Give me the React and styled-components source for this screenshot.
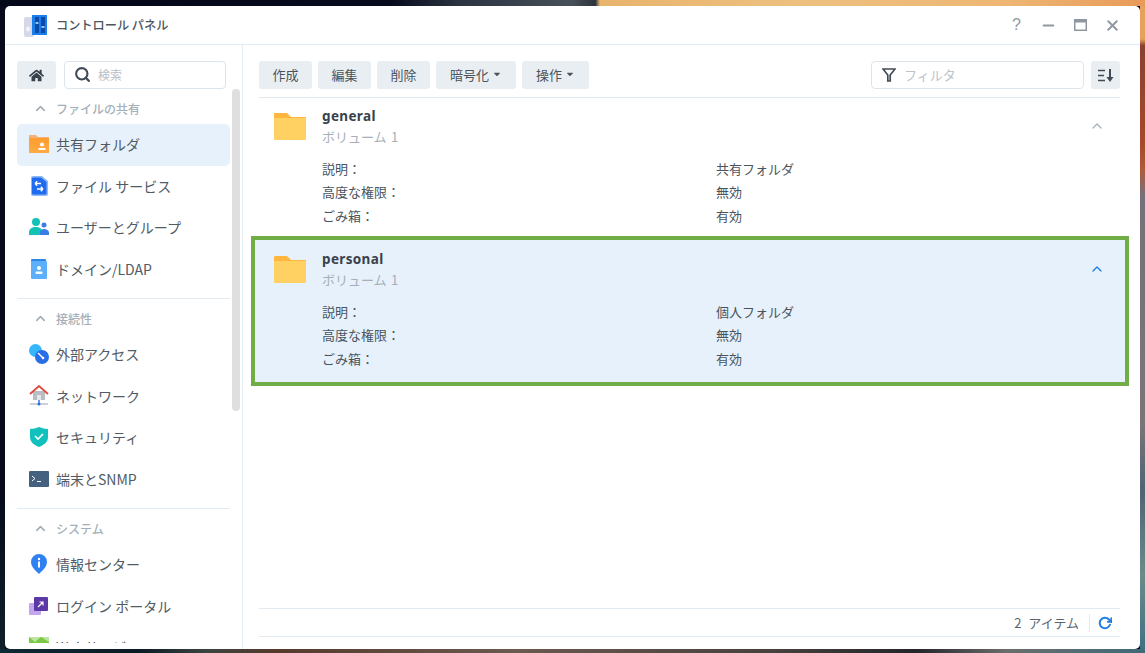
import React from "react";
import styled, { createGlobalStyle } from "styled-components";
import { FiChevronUp, FiSearch, FiX, FiMinus, FiRotateCw } from "react-icons/fi";
import { FaHome, FaCaretDown } from "react-icons/fa";

const cjk = `"Noto Sans CJK JP", "Noto Sans", sans-serif`;
const line = "#e3ebf2";
const btnBg = "#e9eef3";
const fg = "#414b55";
const muted = "#a6afb8";

const Global = createGlobalStyle`
  html, body { margin:0; padding:0; height:100%; overflow:hidden; }
  body {
    font-family:${cjk};
    color:${fg};
    background:
      linear-gradient(90deg, #040818 0, #060a1c 34%, #2a3340 40%, #46505a 50%, #3a4048 51%, #2c3440 52%, #e9b46c 52.4%, #edc080 70%, #eeb673 88%, #e89a58 100%) top/100% 6px no-repeat,
      linear-gradient(90deg, #0e2a34 0, #0a1a24 12%, #3a4440 18%, #553a2c 24%, #6a5a50 45%, #45403c 68%, #22262a 80%, #6a6e6c 88%, #3f6a78 100%) bottom/100% 4px no-repeat,
      linear-gradient(180deg, #e9a05c 0, #e9a05c 6%, #8a4030 7%, #a8482a 22%, #b05a3c 26%, #77707a 30%, #7c7478 65%, #4f6474 75%, #6c8a8a 88%, #3c7084 100%) right/5px 100% no-repeat,
      linear-gradient(180deg, #060a1c 0, #060a1c 75%, #10202a 100%) left/5px 100% no-repeat,
      #060a1c;
  }
`;

const Win = styled.div`
  position:absolute;
  left:5px; top:6px;
  width:1135px; height:643px;
  background:#fff;
  border-radius:5px;
  display:flex;
  flex-direction:column;
  overflow:hidden;
`;

const TitleBar = styled.header`
  height:39px;
  box-sizing:border-box;
  flex:none;
  border-bottom:1px solid ${line};
  display:flex;
  align-items:center;
  padding-left:18px;
  color:#4b5560;
  gap:9px;
`;

const TitleText = styled.span`
  flex:1;
  font-size:12.2px;
  font-weight:500;
`;

const WinButtons = styled.div`
  display:flex;
  align-items:center;
  gap:11px;
  padding-right:17px;
`;

const WinBtn = styled.span`
  width:21px;
  height:21px;
  display:flex;
  align-items:center;
  justify-content:center;
  font-family:"Liberation Sans", sans-serif;
  font-size:16px;
  color:#8f98a1;
`;

const Body = styled.div`
  flex:1;
  display:flex;
  min-height:0;
`;

const Side = styled.aside`
  width:237px;
  flex:none;
  border-right:1px solid ${line};
  padding-top:16px;
  padding-bottom:6px;
  position:relative;
  display:flex;
  flex-direction:column;
`;

const SideTop = styled.div`
  display:flex;
  gap:8px;
  padding:0 16px 0 12px;
  flex:none;
`;

const HomeBtn = styled.button`
  width:39px;
  height:28px;
  border:0;
  border-radius:3px;
  background:${btnBg};
  color:#37424d;
  display:flex;
  align-items:center;
  justify-content:center;
  font-size:15px;
  padding:0;
`;

const SearchBox = styled.div`
  width:162px;
  height:28px;
  box-sizing:border-box;
  border:1px solid #dde5ec;
  border-radius:4px;
  display:flex;
  align-items:center;
  padding:0 0 1px 9px;
  gap:7px;
  font-size:12px;
  color:#b9c0c7;
  svg { color:#414b55; font-size:17px; stroke-width:3; }
`;

const Scrollbar = styled.div`
  position:absolute;
  right:2px;
  top:44px;
  width:8px;
  height:322px;
  border-radius:4px;
  background:#dfdfdf;
`;

const Nav = styled.nav`
  flex:1;
  overflow:hidden;
  padding:3px 12px 0;
`;

const SectionHead = styled.div`
  height:32px;
  display:flex;
  align-items:center;
  padding-left:16px;
  gap:8px;
  font-size:12px;
  color:${muted};
  font-weight:500;
  svg { font-size:15px; stroke-width:2.5; color:#a3acb4; }
`;

const Item = styled.div`
  height:41.5px;
  width:213px;
  box-sizing:border-box;
  border-radius:5px;
  display:flex;
  align-items:center;
  padding:0 0 1px 12px;
  gap:7px;
  font-size:14px;
  color:#515b65;
  background:${p => (p.$active ? "#e6f1fb" : "transparent")};
  svg { flex:none; }
`;

const Divider = styled.div`
  width:213px;
  height:1px;
  background:${line};
  margin:8px 0 3px;
`;

const Main = styled.main`
  flex:1;
  min-width:0;
  display:flex;
  flex-direction:column;
  padding:16px 20px 12px 16px;
`;

const Toolbar = styled.div`
  display:flex;
  gap:6px;
  flex:none;
  padding-bottom:8px;
  box-sizing:border-box;
  border-bottom:1px solid #dfe6ec;
  height:37px;
`;

const ToolBtn = styled.button`
  height:28px;
  width:${p => p.$w}px;
  padding:0 0 2px;
  border:0;
  border-radius:3px;
  background:${btnBg};
  color:#4a545e;
  font-family:${cjk};
  font-size:13px;
  display:flex;
  align-items:center;
  justify-content:center;
  gap:3px;
  svg { font-size:10px; }
`;

const Filter = styled.div`
  margin-left:auto;
  width:213px;
  height:28px;
  box-sizing:border-box;
  border:1px solid #dde5ec;
  border-radius:4px;
  display:flex;
  align-items:center;
  padding:0 0 2px 10px;
  gap:8px;
  font-size:13px;
  color:#bcc3ca;
  svg { margin-top:2px; }
`;

const SortBtn = styled(ToolBtn)`
  width:29px;
  margin-left:1px;
  padding:0;
`;

const List = styled.div`
  flex:1;
  min-height:0;
`;

const Row = styled.section`
  position:relative;
  display:grid;
  grid-template-columns:32px 1fr;
  column-gap:16px;
  box-sizing:border-box;
  padding:${p => (p.$selected ? "11px 0 0 19px" : "10px 0 0 15px")};
  height:${p => (p.$selected ? "150px" : "138px")};
  background:${p => (p.$selected ? "#e6f1fb" : "#fff")};
  border:${p => (p.$selected ? "4px solid #70ad47" : "0")};
  margin:${p => (p.$selected ? "0 -9px 0 -8px" : "0")};
  > svg { margin-top:4px; }
`;

const RowName = styled.div`
  font-family:"Noto Sans", sans-serif;
  font-size:13.5px;
  font-weight:700;
  line-height:16px;
  letter-spacing:.35px;
  color:#37424d;
`;

const RowVol = styled.div`
  font-size:13px;
  line-height:16px;
  margin-top:5px;
  word-spacing:1.5px;
  color:${muted};
`;

const Props = styled.dl`
  margin:11.5px 0 0;
  display:grid;
  grid-template-columns:394px 1fr;
  grid-auto-rows:23.5px;
  align-items:center;
  font-size:13px;
  color:#4a545e;
  dt, dd { margin:0; }
`;

const Chevron = styled.span`
  position:absolute;
  top:${p => (p.$selected ? "21px" : "20px")};
  right:${p => (p.$selected ? "20px" : "15px")};
  font-size:16px;
  line-height:0;
  color:${p => (p.$selected ? "#1f7fe0" : "#aab3bb")};
`;

const Footer = styled.footer`
  flex:none;
  height:29px;
  box-sizing:border-box;
  border-top:1px solid ${line};
  border-bottom:1px solid ${line};
  display:flex;
  align-items:center;
  justify-content:flex-end;
  font-size:13px;
  word-spacing:4px;
  color:#5a646e;
`;

const FooterSep = styled.span`
  width:1px;
  height:18px;
  background:${line};
  margin:0 8px 0 10px;
`;

const Refresh = styled.span`
  color:#1f7fe0;
  font-size:14px;
  line-height:0;
  margin-right:8px;
  svg { stroke-width:3.4; }
`;

const PanelIcon = () => (
  <svg width="24" height="23" viewBox="0 0 24 23">
    <rect x="1" y="3" width="10" height="20" rx="2" fill="#d5d8e8" />
    <ellipse cx="5" cy="15" rx="2" ry="2.600" fill="#f4f5fa" />
    <rect x="9" y="1" width="15" height="20" fill="#1a7de8" />
    <rect x="12" y="3" width="4" height="16" fill="#0b4aa8" />
    <rect x="18" y="3" width="4" height="16" fill="#0b4aa8" />
    <rect x="12.500" y="8" width="3" height="2" fill="#8fc4f5" />
    <rect x="18.500" y="12" width="3" height="2" fill="#8fc4f5" />
  </svg>
);

const FolderIcon = () => (
  <svg width="32" height="28" viewBox="0 0 32 28">
    <path d="M0 2a1 1 0 0 1 1-1h12l4 4h15v6H0z" fill="#ffb63f" />
    <path d="M0 6h32v21a1 1 0 0 1-1 1H1a1 1 0 0 1-1-1z" fill="#ffd062" />
  </svg>
);

const SharedIcon = () => (
  <svg width="20" height="20" viewBox="0 0 20 20">
    <defs>
      <linearGradient id="sharedFill" x1="0" y1="0" x2="0" y2="1">
        <stop offset="0" stopColor="#ff9d2e" />
        <stop offset="1" stopColor="#ffab45" />
      </linearGradient>
    </defs>
    <path d="M0 1h7l2 2h11v3H0z" fill="#f4b27a" />
    <rect x="0" y="4" width="20" height="15" fill="url(#sharedFill)" />
    <circle cx="13" cy="10.500" r="2" fill="#fff" />
    <rect x="9.500" y="14" width="7" height="2" fill="#fff" />
  </svg>
);

const FileSvcIcon = () => (
  <svg width="20" height="20" viewBox="0 0 20 20">
    <path d="M4 0h9l6 5v13a2 2 0 0 1-2 2H4a2 2 0 0 1-2-2V2a2 2 0 0 1 2-2z" fill="#8fb8f5" />
    <path d="M4 1.500h8l5.500 4.500v11.500a1 1 0 0 1-1 1H4a1 1 0 0 1-1-1V2.500a1 1 0 0 1 1-1z" fill="#1f6cf0" />
    <path d="M12 7.500H6M6 7.500l2.200-2.200M6 7.500l2.200 2.200M8 13h6M14 13l-2.200-2.200M14 13l-2.200 2.200" stroke="#fff" strokeWidth="1.400" fill="none" />
  </svg>
);

const UsersIcon = () => (
  <svg width="20" height="20" viewBox="0 0 20 20">
    <circle cx="7" cy="5" r="4" fill="#14c2b5" />
    <path d="M0 18v-3c0-3 3-5 7-5 3 0 5 1 6 3v5z" fill="#14c2b5" />
    <circle cx="15" cy="8" r="2.500" fill="#3a7de8" />
    <path d="M11 18v-2c0-3 2-4 4-4s5 1 5 4v2z" fill="#3a7de8" />
  </svg>
);

const DomainIcon = () => (
  <svg width="20" height="20" viewBox="0 0 20 20">
    <rect x="2" y="0" width="15" height="3" rx="1" fill="#2b86e8" />
    <rect x="2" y="2" width="16" height="18" rx="1" fill="#5cb0fb" />
    <circle cx="10" cy="9" r="2" fill="#fff" />
    <rect x="6.500" y="12.500" width="7" height="2.500" rx="1" fill="#fff" />
  </svg>
);

const AccessIcon = () => (
  <svg width="20" height="20" viewBox="0 0 20 20">
    <circle cx="6.500" cy="6.500" r="6.500" fill="#36b6fb" />
    <circle cx="13" cy="13" r="7" fill="#2a6ee6" />
    <path d="M9 9l5 5" stroke="#fff" strokeWidth="1.400" />
    <circle cx="14" cy="14" r="1.300" fill="#fff" />
  </svg>
);

const NetIcon = () => (
  <svg width="20" height="21" viewBox="0 0 20 21">
    <rect x="4" y="6" width="12" height="9" fill="#b8bec4" />
    <path d="M1 9l9-8 9 8" fill="none" stroke="#e0483e" strokeWidth="1.800" />
    <rect x="8" y="10" width="4" height="5" fill="#e4e7ea" />
    <path d="M1 19h18" stroke="#b8bec4" strokeWidth="1.400" />
    <path d="M10 15v4" stroke="#2a6ee6" strokeWidth="1.400" />
    <circle cx="10" cy="19" r="1.500" fill="#2a6ee6" />
  </svg>
);

const ShieldIcon = () => (
  <svg width="20" height="20" viewBox="0 0 20 20">
    <path d="M1 2c3 0 6-1 9-2 3 1 6 2 9 2v8c0 5-4 8-9 10-5-2-9-5-9-10z" fill="#12c0bd" />
    <path d="M6 9l3 3 5-5" fill="none" stroke="#fff" strokeWidth="1.700" />
  </svg>
);

const TermIcon = () => (
  <svg width="20" height="16" viewBox="0 0 20 16">
    <rect width="20" height="16" rx="1" fill="#44617f" />
    <path d="M3 5l3 2.500L3 10" fill="none" stroke="#fff" strokeWidth="1" />
    <path d="M8 10.500h4" stroke="#fff" strokeWidth="1" />
  </svg>
);

const InfoIcon = () => (
  <svg width="20" height="20" viewBox="0 0 20 20">
    <path d="M10 0a8 8 0 0 1 8 8c0 5-5 9-8 12-3-3-8-7-8-12a8 8 0 0 1 8-8z" fill="#2f80f0" />
    <circle cx="10" cy="5" r="1.200" fill="#fff" />
    <rect x="9" y="7.500" width="2" height="6" fill="#fff" />
  </svg>
);

const PortalIcon = () => (
  <svg width="20" height="20" viewBox="0 0 20 20">
    <rect x="0" y="7" width="12" height="12" rx="1" fill="#c3a6ee" />
    <rect x="5" y="1" width="14" height="14" rx="1" fill="#5b3aa8" />
    <path d="M9 11l5-5M10.500 6H14v3.500" fill="none" stroke="#fff" strokeWidth="1.200" />
  </svg>
);

const WebIcon = () => (
  <svg width="20" height="20" viewBox="0 0 20 20">
    <rect width="20" height="20" fill="#7ac943" />
    <path d="M0 0l6 5 6-5zM12 0h8v5z" fill="#fff" opacity=".5" />
  </svg>
);

const MaxIcon = () => (
  <svg width="13" height="12" viewBox="0 0 13 12">
    <rect x="0.750" y="0.750" width="11.500" height="10.500" fill="none" stroke="#8f98a1" strokeWidth="1.500" />
    <rect x="0" y="0" width="13" height="3.500" fill="#8f98a1" />
  </svg>
);

const FunnelIcon = () => (
  <svg width="14" height="14" viewBox="0 0 14 14">
    <path d="M1 1h12L8.200 7v6H5.800V7z" fill="none" stroke="#414b55" strokeWidth="1.700" />
  </svg>
);

const SortIcon = () => (
  <svg width="16" height="13" viewBox="0 0 16 13">
    <path d="M0 1.500h7M0 6.500h6M0 11.500h7" stroke="#414b55" strokeWidth="1.600" />
    <path d="M12 0v9" stroke="#414b55" strokeWidth="2" />
    <path d="M8.500 8h7L12 13z" fill="#414b55" />
  </svg>
);

const sections = [
  { title: "ファイルの共有", items: [
    ["共有フォルダ", SharedIcon, true],
    ["ファイル サービス", FileSvcIcon],
    ["ユーザーとグループ", UsersIcon],
    ["ドメイン/LDAP", DomainIcon],
  ]},
  { title: "接続性", items: [
    ["外部アクセス", AccessIcon],
    ["ネットワーク", NetIcon],
    ["セキュリティ", ShieldIcon],
    ["端末とSNMP", TermIcon],
  ]},
  { title: "システム", items: [
    ["情報センター", InfoIcon],
    ["ログイン ポータル", PortalIcon],
    ["Webサービス", WebIcon],
  ]},
];

const folders = [
  { name: "general", desc: "共有フォルダ" },
  { name: "personal", desc: "個人フォルダ", selected: true },
];

export default function App() {
  return (
    <>
      <Global />
      <Win>
        <TitleBar>
          <PanelIcon />
          <TitleText>コントロール パネル</TitleText>
          <WinButtons>
            <WinBtn>?</WinBtn>
            <WinBtn><FiMinus size={17} strokeWidth={2.5} /></WinBtn>
            <WinBtn><MaxIcon /></WinBtn>
            <WinBtn><FiX size={17} strokeWidth={2.8} /></WinBtn>
          </WinButtons>
        </TitleBar>
        <Body>
          <Side>
            <SideTop>
              <HomeBtn><FaHome /></HomeBtn>
              <SearchBox><FiSearch />検索</SearchBox>
            </SideTop>
            <Scrollbar />
            <Nav>
              {sections.map((s, i) => (
                <React.Fragment key={s.title}>
                  {i > 0 && <Divider />}
                  <SectionHead><FiChevronUp />{s.title}</SectionHead>
                  {s.items.map(([label, Icon, active]) => (
                    <Item key={label} $active={active}><Icon />{label}</Item>
                  ))}
                </React.Fragment>
              ))}
            </Nav>
          </Side>
          <Main>
            <Toolbar>
              <ToolBtn $w={53}>作成</ToolBtn>
              <ToolBtn $w={53}>編集</ToolBtn>
              <ToolBtn $w={53}>削除</ToolBtn>
              <ToolBtn $w={80}>暗号化<FaCaretDown /></ToolBtn>
              <ToolBtn $w={67}>操作<FaCaretDown /></ToolBtn>
              <Filter><FunnelIcon />フィルタ</Filter>
              <SortBtn><SortIcon /></SortBtn>
            </Toolbar>
            <List>
              {folders.map(f => (
                <Row key={f.name} $selected={f.selected}>
                  <FolderIcon />
                  <div>
                    <RowName>{f.name}</RowName>
                    <RowVol>ボリューム 1</RowVol>
                    <Props>
                      <dt>説明：</dt><dd>{f.desc}</dd>
                      <dt>高度な権限：</dt><dd>無効</dd>
                      <dt>ごみ箱：</dt><dd>有効</dd>
                    </Props>
                  </div>
                  <Chevron $selected={f.selected}><FiChevronUp /></Chevron>
                </Row>
              ))}
            </List>
            <Footer>
              2 アイテム
              <FooterSep />
              <Refresh><FiRotateCw /></Refresh>
            </Footer>
          </Main>
        </Body>
      </Win>
    </>
  );
}
